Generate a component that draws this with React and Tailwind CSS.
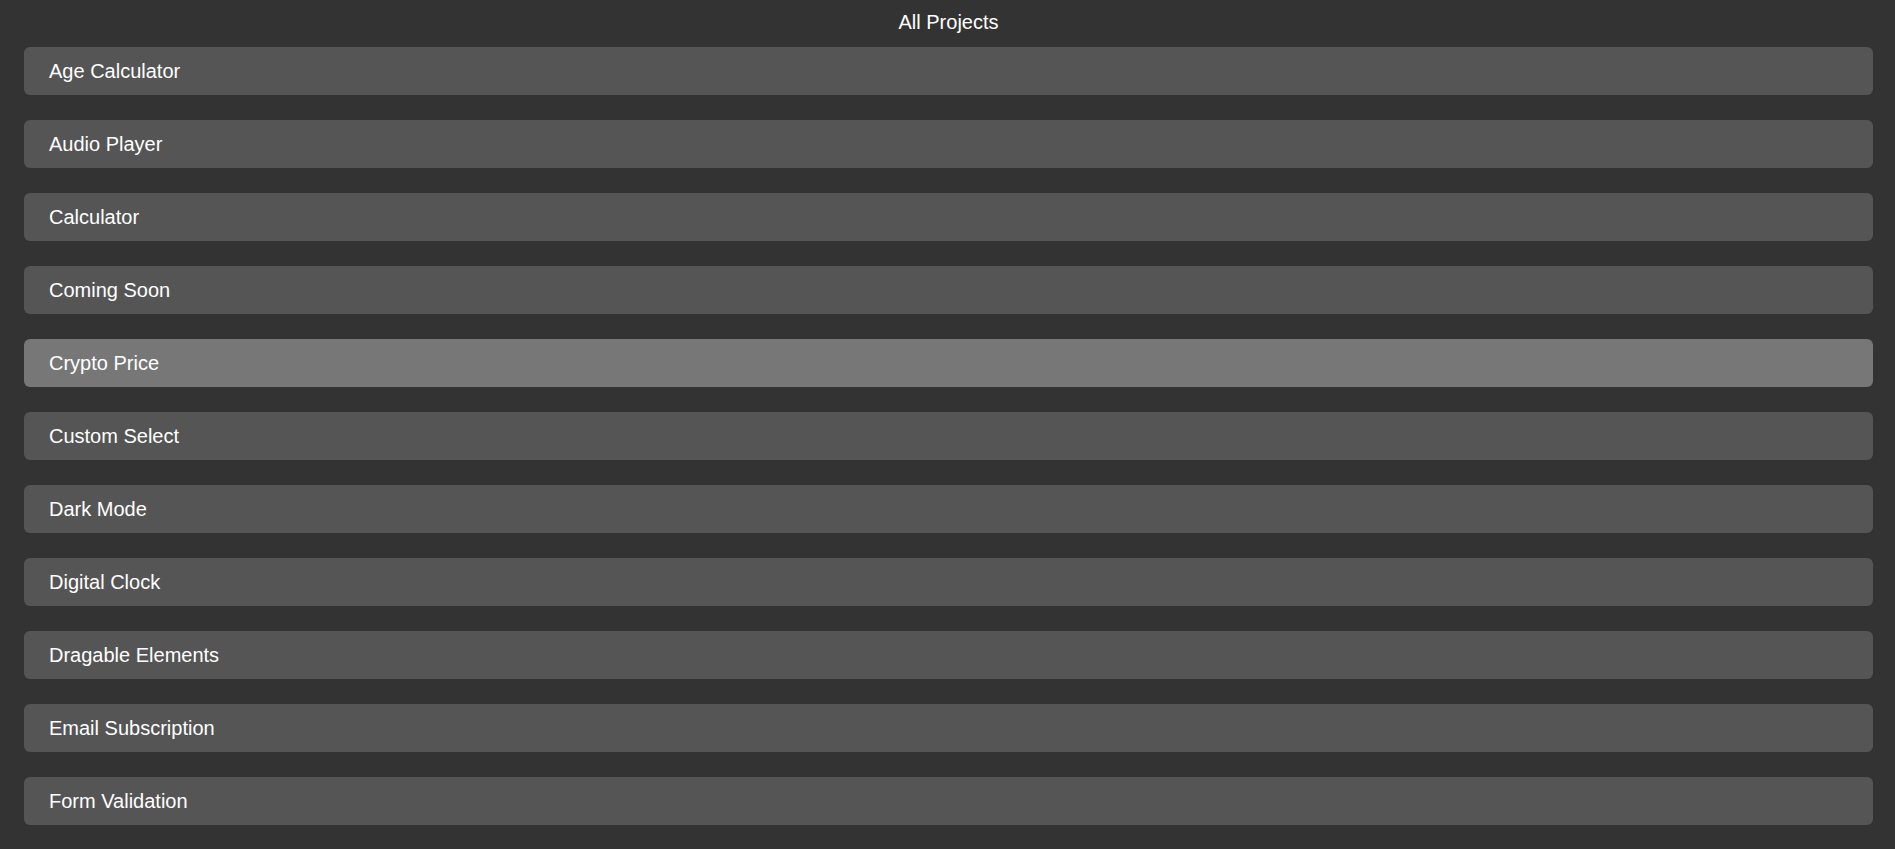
import React from 'react';

const projects = [
  'Age Calculator',
  'Audio Player',
  'Calculator',
  'Coming Soon',
  'Crypto Price',
  'Custom Select',
  'Dark Mode',
  'Digital Clock',
  'Dragable Elements',
  'Email Subscription',
  'Form Validation',
];

const App = () => {
  return (
    <div className="min-h-screen bg-[#333333] text-white font-['Liberation_Sans',Arial,sans-serif] pt-[11px] pb-[20px] pl-[24px] pr-[22px]">
      <h1 className="text-[20px] leading-[23px] text-center font-normal mb-[13px]">All Projects</h1>
      <div className="flex flex-col gap-[25px]">
        {projects.map(name => (
          <div
            key={name}
            className={`h-[48px] flex items-center px-[25px] rounded-[6px] text-[20px] ${name === 'Crypto Price' ? 'bg-[#777777]' : 'bg-[#555555]'}`}
          >
            {name}
          </div>
        ))}
      </div>
    </div>
  );
};

export default App;
